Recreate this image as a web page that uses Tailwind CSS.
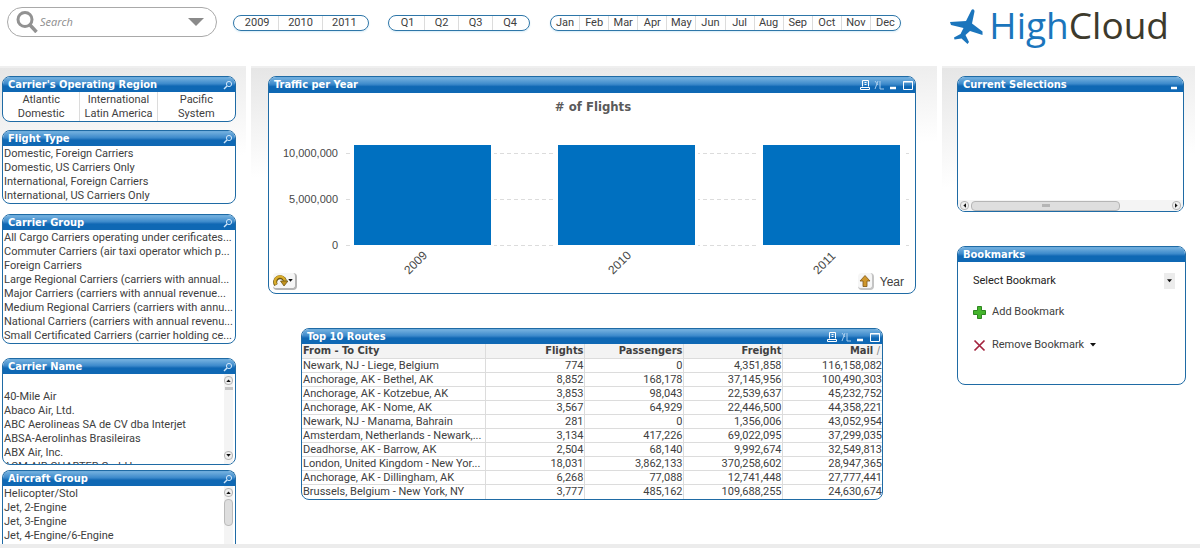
<!DOCTYPE html>
<html lang="en">
<head>
<meta charset="utf-8">
<title>HighCloud</title>
<script src="https://cdn.jsdelivr.net/npm/@tailwindcss/browser@4"></script>
</head>
<body class="flex h-screen flex-col overflow-hidden bg-white font-[Roboto,sans-serif] text-[11px] leading-[14px] text-[#404040]">

<svg class="hidden">
  <defs>
    <symbol id="find" viewBox="0 0 10 10"><circle cx="6" cy="4" r="2.6" fill="none" stroke="#cfe6fa" stroke-width="1"/><path d="M4 6L1 9" stroke="#cfe6fa" stroke-width="1.4"/></symbol>
    <symbol id="print" viewBox="0 0 10 10"><path d="M2.5 6.500V.5h6v6M.5 9.500V7.500h9v2zM4.500 2.500h2M4.500 4.500h2" fill="none" stroke="#fff"/></symbol>
    <symbol id="xl" viewBox="0 0 10 10"><path d="M1 1l3 4M4 1L1 9M6 1v8h4" fill="none" stroke="#b5d6f2" stroke-width=".9"/></symbol>
    <symbol id="min" viewBox="0 0 10 10"><path d="M2 8h6" stroke="#fff" stroke-width="2.400"/></symbol>
    <symbol id="max" viewBox="0 0 10 10"><path d="M.5 1.500h9v8h-9zM0 2h10" fill="none" stroke="#fff"/></symbol>
    <symbol id="down" viewBox="0 0 6 4"><path d="M0 0h6L3 3.500z" fill="#111"/></symbol>
  </defs>
</svg>

<header class="flex h-[66px] shrink-0 items-start pl-[7px] pr-[31px] pt-[7px]">
  <label class="flex h-[30px] w-[210px] items-center rounded-full border border-[#a9a9a9] pl-2 pr-3">
    <svg class="h-[22px] w-[22px] shrink-0" viewBox="0 0 22 22" fill="none" stroke="#929292"><circle cx="9" cy="8.500" r="7" stroke-width="3"/><path d="M14 14l6.500 7" stroke-width="3.500"/></svg>
    <input type="text" aria-label="Search" placeholder="Search" class="ml-[2px] w-full min-w-0 flex-1 font-['Open_Sans',sans-serif] text-[11px] italic outline-none placeholder:text-[#8c8c8c]">
    <svg class="h-2 w-4 shrink-0" viewBox="0 0 16 8"><path d="M0 0h16L8 8z" fill="#8a8a8a"/></svg>
  </label>
  <div class="ml-4 mt-2 grid h-4 w-[136px] grid-cols-3 divide-x divide-[#dcdcdc] rounded-lg border border-[#2e76a8] px-[2px] leading-[14px] shadow-[0_1px_2px_#d6ebf7]">
    <button>2009</button><button>2010</button><button>2011</button>
  </div>
  <div class="ml-[19px] mt-2 grid h-4 w-[142px] grid-cols-4 divide-x divide-[#dcdcdc] rounded-lg border border-[#2e76a8] px-[2px] leading-[14px] shadow-[0_1px_2px_#d6ebf7]">
    <button>Q1</button><button>Q2</button><button>Q3</button><button>Q4</button>
  </div>
  <div class="ml-5 mt-2 grid h-4 w-[351px] grid-cols-12 divide-x divide-[#dcdcdc] rounded-lg border border-[#2e76a8] leading-[14px] shadow-[0_1px_2px_#d6ebf7]">
    <button>Jan</button><button>Feb</button><button>Mar</button><button>Apr</button><button>May</button><button>Jun</button><button>Jul</button><button>Aug</button><button>Sep</button><button>Oct</button><button>Nov</button><button>Dec</button>
  </div>
  <a href="#" class="ml-auto flex items-start text-[#1b75bc]">
    <svg class="mr-[5px] mt-[2px] h-[36px] w-[34px]" viewBox="0 0 34 36" fill="#1b75bc"><path d="M21.500 1C22.500 -.5 24.500 0 24.500 2.500L22 14.500L32.500 22.500L32.500 26L20 22L15.500 26L19 33L17.500 35L11.500 29.500L4.500 30.500L4 28.500L10.500 25L13.500 19L1 16L0 13L16 12z"/></svg>
    <span class="font-['Open_Sans',sans-serif] text-[37px] leading-[36px]">High<span class="text-[#3d3a2c]">Cloud</span></span>
  </a>
</header>

<main class="flex min-h-0 flex-1 gap-[5px] border-b-4 border-[#ececec] pr-[5px]">

  <aside class="flex w-[246px] shrink-0 flex-col border-t-2 border-[#efefef] bg-[linear-gradient(172deg,#e6e6e6,#fff_120px)] pl-[2px] pr-[10px] pt-2">
    <section class="mb-2 shrink-0 overflow-hidden rounded-lg border border-[#1f6ba5] bg-white">
      <h2 class="flex h-[15px] items-center justify-between bg-linear-to-b from-[#6cabdc] from-10% via-[#3c8acb] via-45% to-[#0f68b4] to-60% pl-[5px] pr-[2px] font-['DejaVu_Sans_Condensed',sans-serif] font-bold text-white">Carrier's Operating Region<button aria-label="Find region"><svg class="size-[10px]"><use href="#find"/></svg></button></h2>
      <div class="grid h-[29px] grid-cols-3 divide-x divide-[#dcdcdc] text-center">
        <ul class="pt-px"><li>Atlantic</li><li>Domestic</li></ul><ul class="pt-px"><li>International</li><li>Latin America</li></ul><ul class="pt-px"><li>Pacific</li><li>System</li></ul>
      </div>
    </section>
    <section class="mb-[10px] h-[74px] shrink-0 overflow-hidden rounded-lg border border-[#1f6ba5] bg-white">
      <h2 class="flex h-[15px] items-center justify-between bg-linear-to-b from-[#6cabdc] from-10% via-[#3c8acb] via-45% to-[#0f68b4] to-60% pl-[5px] pr-[2px] font-['DejaVu_Sans_Condensed',sans-serif] font-bold text-white">Flight Type<button aria-label="Find flight type"><svg class="size-[10px]"><use href="#find"/></svg></button></h2>
      <ul class="whitespace-nowrap pl-px pt-px"><li>Domestic, Foreign Carriers</li><li>Domestic, US Carriers Only</li><li>International, Foreign Carriers</li><li>International, US Carriers Only</li></ul>
    </section>
    <section class="mb-[14px] h-[130px] shrink-0 overflow-hidden rounded-lg border border-[#1f6ba5] bg-white">
      <h2 class="flex h-[15px] items-center justify-between bg-linear-to-b from-[#6cabdc] from-10% via-[#3c8acb] via-45% to-[#0f68b4] to-60% pl-[5px] pr-[2px] font-['DejaVu_Sans_Condensed',sans-serif] font-bold text-white">Carrier Group<button aria-label="Find carrier group"><svg class="size-[10px]"><use href="#find"/></svg></button></h2>
      <ul class="whitespace-nowrap pl-px pt-px"><li>All Cargo Carriers operating under cerificates...</li><li>Commuter Carriers (air taxi operator which p...</li><li>Foreign Carriers</li><li>Large Regional Carriers (carriers with annual...</li><li>Major Carriers (carriers with annual revenue...</li><li>Medium Regional Carriers (carriers with annu...</li><li>National Carriers (carriers with annual revenu...</li><li>Small Certificated Carriers (carrier holding ce...</li></ul>
    </section>
    <section class="mb-[5px] h-[107px] shrink-0 overflow-hidden rounded-lg border border-[#1f6ba5] bg-white">
      <h2 class="flex h-[15px] items-center justify-between bg-linear-to-b from-[#6cabdc] from-10% via-[#3c8acb] via-45% to-[#0f68b4] to-60% pl-[5px] pr-[2px] font-['DejaVu_Sans_Condensed',sans-serif] font-bold text-white">Carrier Name<button aria-label="Find carrier name"><svg class="size-[10px]"><use href="#find"/></svg></button></h2>
      <div class="flex h-[90px] justify-between">
        <ul class="whitespace-nowrap pl-px pt-4"><li>40-Mile Air</li><li>Abaco Air, Ltd.</li><li>ABC Aerolineas SA de CV dba Interjet</li><li>ABSA-Aerolinhas Brasileiras</li><li>ABX Air, Inc.</li><li>ACM AIR CHARTER GmbH</li></ul>
        <div class="mr-[2px] flex w-[9px] flex-col items-center bg-[#f4f4f4] pb-1 pt-[2px]">
          <button aria-label="Scroll up" class="grid size-[9px] place-items-center rounded-sm border border-[#b5b5b5] bg-[#eee]"><svg class="h-[3px] w-[5px] rotate-180"><use href="#down"/></svg></button>
          <div class="mt-[2px] h-[3px] w-[8px] bg-[#c6c6c6]"></div>
          <button aria-label="Scroll down" class="mt-auto grid size-[9px] place-items-center rounded-sm border border-[#b5b5b5] bg-[#eee]"><svg class="h-[3px] w-[5px]"><use href="#down"/></svg></button>
        </div>
      </div>
    </section>
    <section class="min-h-0 flex-1 overflow-hidden rounded-t-lg border border-b-0 border-[#1f6ba5] bg-white">
      <h2 class="flex h-[15px] items-center justify-between bg-linear-to-b from-[#6cabdc] from-10% via-[#3c8acb] via-45% to-[#0f68b4] to-60% pl-[5px] pr-[2px] font-['DejaVu_Sans_Condensed',sans-serif] font-bold text-white">Aircraft Group<button aria-label="Find aircraft group"><svg class="size-[10px]"><use href="#find"/></svg></button></h2>
      <div class="flex h-full justify-between">
        <ul class="whitespace-nowrap pl-px pt-px"><li>Helicopter/Stol</li><li>Jet, 2-Engine</li><li>Jet, 3-Engine</li><li>Jet, 4-Engine/6-Engine</li></ul>
        <div class="mr-[2px] flex w-[9px] flex-col items-center bg-[#f4f4f4] pt-[2px]">
          <button aria-label="Scroll up" class="grid size-[9px] place-items-center rounded-sm border border-[#b5b5b5] bg-[#eee]"><svg class="h-[3px] w-[5px] rotate-180"><use href="#down"/></svg></button>
          <div class="mt-[2px] h-[27px] w-[9px] rounded-sm border border-[#bbb] bg-[#dedede]"></div>
        </div>
      </div>
    </section>
  </aside>

  <div class="flex min-w-0 flex-1 flex-col border-t-2 border-[#efefef] bg-[linear-gradient(177deg,#e6e6e6,#fff_110px)] pl-[17px] pr-[21px] pt-2">
    <section class="flex h-[218px] flex-col overflow-hidden rounded-lg border border-[#1f6ba5] bg-white">
      <h2 class="flex h-[16px] items-center bg-linear-to-b from-[#6cabdc] from-10% via-[#3c8acb] via-45% to-[#0f68b4] to-60% pl-[5px] pr-[2px] font-['DejaVu_Sans_Condensed',sans-serif] font-bold text-white"><span class="flex-1">Traffic per Year</span>
        <span class="flex gap-[4px]"><button aria-label="Print"><svg class="size-[10px]"><use href="#print"/></svg></button><button aria-label="Send to Excel"><svg class="size-[10px]"><use href="#xl"/></svg></button><button aria-label="Minimize"><svg class="size-[10px]"><use href="#min"/></svg></button><button aria-label="Maximize" class="ml-px"><svg class="size-[10px]"><use href="#max"/></svg></button></span></h2>
      <svg class="w-full overflow-visible font-['Liberation_Sans',Arial,sans-serif]" viewBox="0 0 646 180" font-size="11" fill="#484848">
        <text x="324" y="18" text-anchor="middle" font-family="DejaVu Sans Condensed, DejaVu Sans" font-weight="bold" font-size="13" fill="#5a5a5a"># of Flights</text>
        <path d="M77 60.500H640M77 106.500H640M77 152.500H640" stroke="#dcdcdc" stroke-dasharray="4 3"/>
        <g fill="#fff"><rect x="81" y="52" width="144" height="102"/><rect x="285" y="52" width="144" height="102"/><rect x="490" y="52" width="144" height="102"/></g>
        <g fill="#0070c0"><rect x="85" y="52" width="137" height="100"/><rect x="289" y="52" width="137" height="100"/><rect x="494" y="52" width="137" height="100"/></g>
        <g text-anchor="end"><text x="69" y="64">10,000,000</text><text x="69" y="110">5,000,000</text><text x="69" y="156">0</text></g>
        <g font-size="12"><text transform="translate(140 182) rotate(-45)">2009</text><text transform="translate(344 182) rotate(-45)">2010</text><text transform="translate(549 182) rotate(-45)">2011</text></g>
      </svg>
      <div class="flex items-center justify-between pl-1 pr-[11px] font-['Liberation_Sans',Arial,sans-serif] text-xs">
        <button aria-label="Fast change" class="flex h-[17px] w-6 items-center justify-between rounded-sm border-b-2 border-r-2 border-[#b4b4b4] bg-[#f6f6f6] pr-[2px]"><svg class="size-[15px]" viewBox="0 0 15 15"><path d="M3 12A5 5 0 1 1 12 8" fill="none" stroke="#6b5511" stroke-width="4"/><path d="M3 11.500A5 5 0 1 1 12 8" fill="none" stroke="#d9ac2b" stroke-width="2.500"/><path d="M7.500 8h7.500l-4 5z" fill="#c3921c" stroke="#5d4a10" stroke-width=".7"/></svg><svg class="h-[3px] w-[5px]"><use href="#down"/></svg></button>
        <span class="flex items-center gap-[6px]"><button aria-label="Drill up" class="grid h-[17px] w-4 place-items-center rounded-sm border-b-2 border-r-2 border-[#c4c4c4] bg-[#f6f6f6]"><svg class="size-3" viewBox="0 0 12 12"><path d="M6 .5L11 6H8v5.500H4V6H1z" fill="#cf972c" stroke="#7d5518" stroke-width=".8"/></svg></button>Year</span>
      </div>
    </section>

    <section class="ml-[33px] mr-[33px] mt-[34px] overflow-hidden rounded-lg border border-[#1f6ba5] bg-white">
      <h2 class="flex h-[15px] items-center bg-linear-to-b from-[#6cabdc] from-10% via-[#3c8acb] via-45% to-[#0f68b4] to-60% pl-[5px] pr-[2px] font-['DejaVu_Sans_Condensed',sans-serif] font-bold text-white"><span class="flex-1">Top 10 Routes</span>
        <span class="flex gap-[4px]"><button aria-label="Print"><svg class="size-[10px]"><use href="#print"/></svg></button><button aria-label="Send to Excel"><svg class="size-[10px]"><use href="#xl"/></svg></button><button aria-label="Minimize"><svg class="size-[10px]"><use href="#min"/></svg></button><button aria-label="Maximize" class="ml-px"><svg class="size-[10px]"><use href="#max"/></svg></button></span></h2>
      <table class="w-full table-fixed text-right [&_td]:h-[14px] [&_td]:overflow-hidden [&_td]:whitespace-nowrap [&_td]:border-r [&_td]:border-t [&_td]:border-[#dcdcdc] [&_td]:p-0 [&_td]:leading-[13px] [&_td:first-child]:pl-px [&_td:first-child]:text-left [&_td:last-child]:border-r-0 [&_th]:h-[14px] [&_th]:border-r [&_th]:border-[#dcdcdc] [&_th]:bg-[#f3f3f3] [&_th]:font-['DejaVu_Sans_Condensed',sans-serif] [&_th:last-child]:border-r-0">
        <colgroup><col><col class="w-[99px]"><col class="w-[99px]"><col class="w-[99px]"><col class="w-[100px]"></colgroup>
        <thead><tr><th class="pl-px text-left">From - To City</th><th>Flights</th><th>Passengers</th><th>Freight</th><th class="pr-[2px]">Mail <span class="font-normal text-[#888]">/</span></th></tr></thead>
        <tbody>
        <tr><td>Newark, NJ - Liege, Belgium</td><td>774</td><td>0</td><td>4,351,858</td><td>116,158,082</td></tr>
        <tr><td>Anchorage, AK - Bethel, AK</td><td>8,852</td><td>168,178</td><td>37,145,956</td><td>100,490,303</td></tr>
        <tr><td>Anchorage, AK - Kotzebue, AK</td><td>3,853</td><td>98,043</td><td>22,539,637</td><td>45,232,752</td></tr>
        <tr><td>Anchorage, AK - Nome, AK</td><td>3,567</td><td>64,929</td><td>22,446,500</td><td>44,358,221</td></tr>
        <tr><td>Newark, NJ - Manama, Bahrain</td><td>281</td><td>0</td><td>1,356,006</td><td>43,052,954</td></tr>
        <tr><td>Amsterdam, Netherlands - Newark,...</td><td>3,134</td><td>417,226</td><td>69,022,095</td><td>37,299,035</td></tr>
        <tr><td>Deadhorse, AK - Barrow, AK</td><td>2,504</td><td>68,140</td><td>9,992,674</td><td>32,549,813</td></tr>
        <tr><td>London, United Kingdom - New Yor...</td><td>18,031</td><td>3,862,133</td><td>370,258,602</td><td>28,947,365</td></tr>
        <tr><td>Anchorage, AK - Dillingham, AK</td><td>6,268</td><td>77,088</td><td>12,741,448</td><td>27,777,441</td></tr>
        <tr><td>Brussels, Belgium - New York, NY</td><td>3,777</td><td>485,162</td><td>109,688,255</td><td>24,630,674</td></tr>
        </tbody>
      </table>
    </section>
  </div>

  <aside class="flex w-[253px] shrink-0 flex-col border-t-2 border-[#efefef] bg-[linear-gradient(172deg,#e6e6e6,#fff_120px)] pl-[15px] pr-[9px] pt-2">
    <section class="mr-[2px] flex h-[136px] flex-col overflow-hidden rounded-lg border border-[#1f6ba5] bg-white">
      <h2 class="flex h-[15px] items-center justify-between bg-linear-to-b from-[#6cabdc] from-10% via-[#3c8acb] via-45% to-[#0f68b4] to-60% pl-[5px] pr-[4px] font-['DejaVu_Sans_Condensed',sans-serif] font-bold text-white">Current Selections<button aria-label="Minimize"><svg class="size-[10px]"><use href="#min"/></svg></button></h2>
      <div class="mt-auto flex h-[11px] items-center bg-[#f4f4f4] pl-[2px] pr-[2px]">
        <button aria-label="Scroll left" class="grid size-[9px] place-items-center rounded-sm border border-[#b5b5b5] bg-[#eee]"><svg class="h-[3px] w-[5px] rotate-90"><use href="#down"/></svg></button>
        <div class="ml-[2px] grid h-[10px] w-[149px] place-items-center rounded-sm border border-[#b5b5b5] bg-[#dedede]"><span class="h-[3px] w-2 bg-[#b5b5b5]"></span></div>
        <button aria-label="Scroll right" class="ml-auto grid size-[9px] place-items-center rounded-sm border border-[#b5b5b5] bg-[#eee]"><svg class="h-[3px] w-[5px] -rotate-90"><use href="#down"/></svg></button>
      </div>
    </section>
    <section class="mt-[34px] h-[139px] overflow-hidden rounded-lg border border-[#1f6ba5] bg-white">
      <h2 class="flex h-[15px] items-center bg-linear-to-b from-[#6cabdc] from-10% via-[#3c8acb] via-45% to-[#0f68b4] to-60% pl-[5px] font-['DejaVu_Sans_Condensed',sans-serif] font-bold text-white">Bookmarks</h2>
      <div class="flex flex-col items-start pl-[15px] pr-[10px] pt-[11px]">
        <div class="grid w-full items-center">
          <select aria-label="Select Bookmark" class="col-start-1 row-start-1 h-4 w-full appearance-none text-[#222]"><option>Select Bookmark</option></select>
          <span class="pointer-events-none col-start-1 row-start-1 grid h-4 w-[11px] place-items-center justify-self-end bg-[#ececec]"><svg class="h-[4px] w-[5px]"><use href="#down"/></svg></span>
        </div>
        <button class="mt-4 flex items-center gap-[6px]"><svg class="size-[13px]" viewBox="0 0 13 13"><path d="M4.500 .5h4v4h4v4h-4v4h-4v-4h-4v-4h4z" fill="#45b52c" stroke="#2e8620"/></svg>Add Bookmark</button>
        <button class="mt-[19px] flex items-center gap-[6px]"><svg class="size-[13px]" viewBox="0 0 13 13"><path d="M1.500 1.500l10 10M11.500 1.500l-10 10" stroke="#a3243f" stroke-width="1.700"/></svg>Remove Bookmark<svg class="h-[4px] w-[6px]"><use href="#down"/></svg></button>
      </div>
    </section>
  </aside>
</main>
</body>
</html>
